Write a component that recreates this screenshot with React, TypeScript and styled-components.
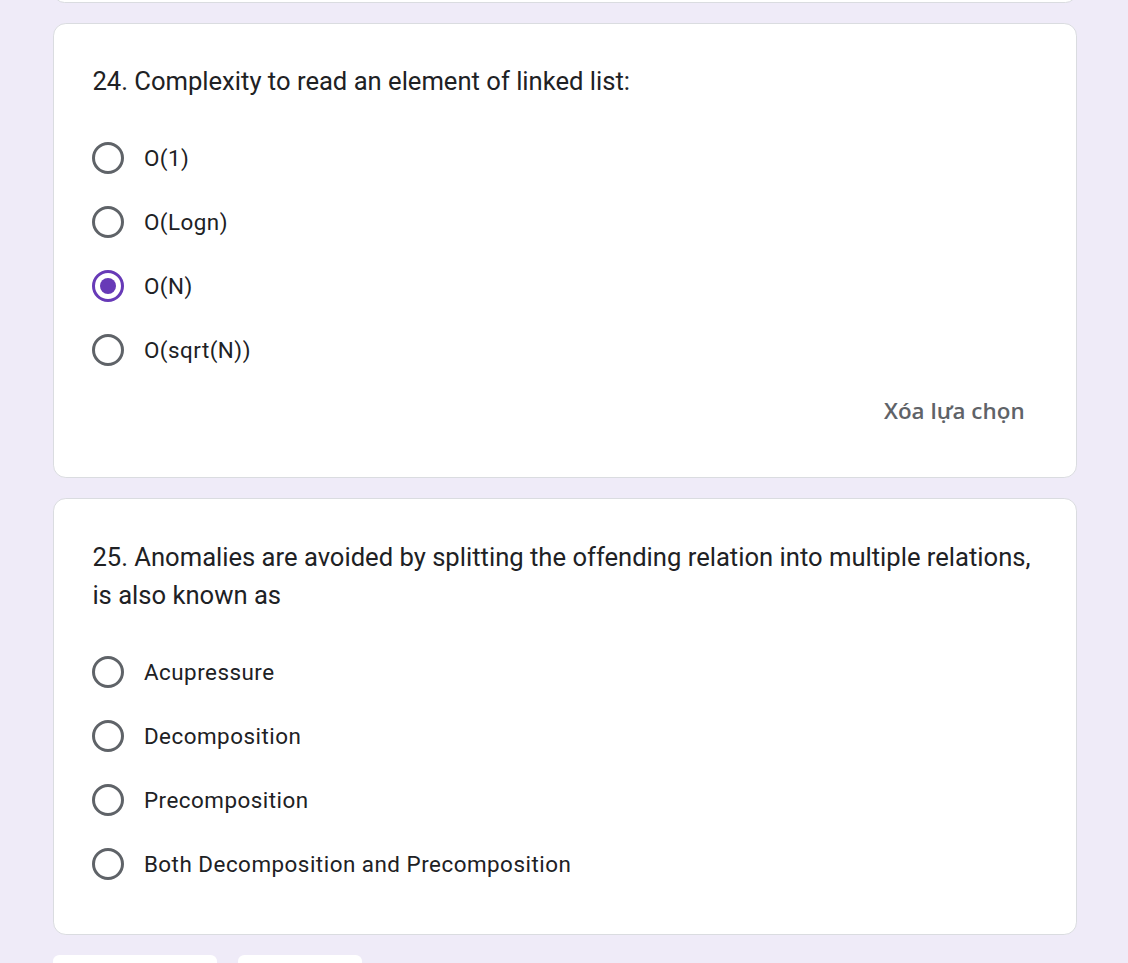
import React from "react";
import styled, { createGlobalStyle, css } from "styled-components";

const Global = createGlobalStyle`
  html, body { margin: 0; padding: 0; background: #efebf8; overflow: hidden; }
  body { font-family: Roboto, "Liberation Sans", Arial, sans-serif; }
`;

const Page = styled.div`
  padding: 0 51px 0 53px;
  display: flex;
  flex-direction: column;
  gap: 20px;
  margin-top: -20px;
  & > * { flex-shrink: 0; }
`;

const Card = styled.div<{ $stub?: boolean }>`
  box-sizing: border-box;
  width: 1024px;
  background: #fff;
  border: 1px solid #dadce0;
  border-radius: 12.8px;
  padding: 38.4px;
  ${(p) =>
    p.$stub &&
    css`
      height: 22.5px;
      padding: 0;
    `}
`;

const Question = styled.div`
  font-size: 25.6px;
  line-height: 38.4px;
  color: #202124;
  letter-spacing: 0;
`;

const Options = styled.div`
  margin-top: 25.6px;
  display: flex;
  flex-direction: column;
`;

const Option = styled.label`
  display: flex;
  align-items: center;
  height: 64px;
  gap: 19.5px;
  cursor: pointer;
`;

const Radio = styled.span<{ $checked?: boolean }>`
  box-sizing: border-box;
  width: 32px;
  height: 32px;
  border-radius: 50%;
  border: 3.2px solid ${(p) => (p.$checked ? "#673ab7" : "#5f6368")};
  display: flex;
  align-items: center;
  justify-content: center;
  flex: none;
  &::after {
    content: "";
    display: ${(p) => (p.$checked ? "block" : "none")};
    width: 16px;
    height: 16px;
    border-radius: 50%;
    background: #673ab7;
  }
`;

const OptionText = styled.span`
  font-size: 22.4px;
  color: #202124;
  letter-spacing: 0.5px;
`;

const ClearRow = styled.div`
  height: 57px;
  display: flex;
  justify-content: flex-end;
  align-items: center;
`;

const ClearButton = styled.button`
  border: none;
  background: none;
  font-family: "Open Sans", Roboto, sans-serif;
  font-weight: 600;
  font-size: 22.4px;
  color: #5f6368;
  padding: 0 13px 0 0;
  cursor: pointer;
`;

const Footer = styled.div`
  display: flex;
  gap: 21px;
`;

const NavButton = styled.div<{ $w: number }>`
  width: ${(p) => p.$w}px;
  height: 40px;
  background: #fff;
  border-radius: 6.4px;
`;

type Q = { title: string; options: string[]; checked?: number; clear?: boolean };

const questions: Q[] = [
  {
    title: "24. Complexity to read an element of linked list:",
    options: ["O(1)", "O(Logn)", "O(N)", "O(sqrt(N))"],
    checked: 2,
    clear: true,
  },
  {
    title:
      "25. Anomalies are avoided by splitting the offending relation into multiple relations, is also known as",
    options: [
      "Acupressure",
      "Decomposition",
      "Precomposition",
      "Both Decomposition and Precomposition",
    ],
  },
];

export default function App() {
  return (
    <>
      <Global />
      <Page>
        <Card $stub />
        {questions.map((q) => (
          <Card key={q.title}>
            <Question>{q.title}</Question>
            <Options>
              {q.options.map((o, i) => (
                <Option key={o}>
                  <Radio $checked={q.checked === i} />
                  <OptionText>{o}</OptionText>
                </Option>
              ))}
            </Options>
            {q.clear && (
              <ClearRow>
                <ClearButton>Xóa lựa chọn</ClearButton>
              </ClearRow>
            )}
          </Card>
        ))}
        <Footer>
          <NavButton $w={164} />
          <NavButton $w={124} />
        </Footer>
      </Page>
    </>
  );
}
